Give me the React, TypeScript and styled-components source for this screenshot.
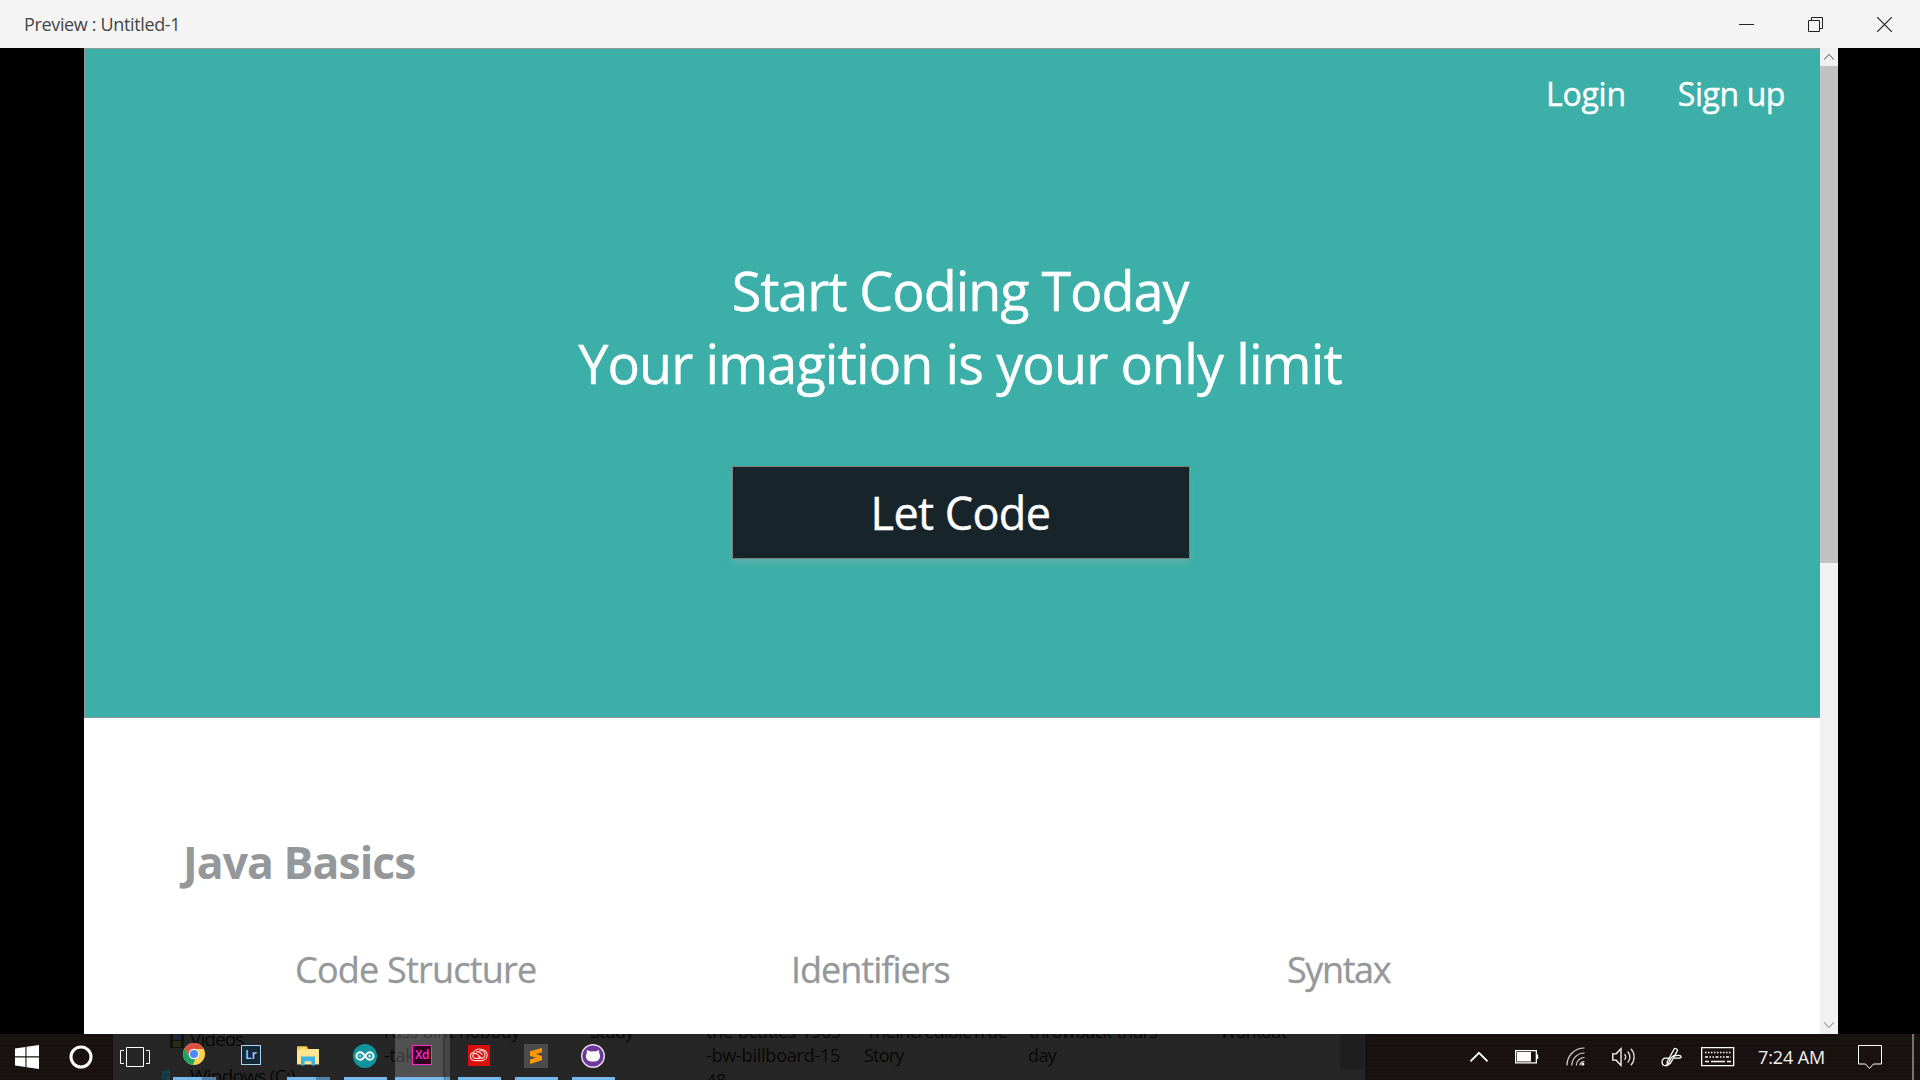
import React from "react";
import styled, { createGlobalStyle } from "styled-components";

const GlobalStyle = createGlobalStyle`
  * { box-sizing: border-box; }
  body {
    margin: 0;
    overflow: hidden;
    background: #000;
    font-family: "Open Sans", "Noto Sans", sans-serif;
  }
  svg { display: block; flex: none; }
`;

const Screen = styled.div`
  width: 1920px;
  height: 1080px;
  display: flex;
  flex-direction: column;
`;

/* ---------- window title bar ---------- */

const TitleBar = styled.header`
  height: 48px;
  flex: none;
  display: flex;
  align-items: center;
  justify-content: space-between;
  padding: 0 1px 0 24px;
  background: #f4f4f4;
`;

const WindowTitle = styled.span`
  font-size: 18px;
  line-height: 24px;
  letter-spacing: -0.35px;
  color: #444;
`;

const WindowControls = styled.div`
  display: flex;
  height: 48px;
`;

const ControlButton = styled.div`
  width: 69px;
  display: flex;
  align-items: center;
  justify-content: center;
`;

/* ---------- previewed page ---------- */

const Viewport = styled.main`
  flex: 1;
  min-height: 0;
  display: flex;
  padding: 0 82px 0 84px;
  background: #000;
`;

const Page = styled.div`
  flex: 1;
  background: #fff;
`;

const Hero = styled.section`
  height: 670px;
  display: flex;
  flex-direction: column;
  align-items: center;
  background: #3bafa8;
  border: solid #8c9a99;
  border-width: 1px 0 1px 1px;
  -webkit-text-stroke: 0.4px #fff;
`;

const Nav = styled.nav`
  align-self: stretch;
  display: flex;
  justify-content: flex-end;
  gap: 52px;
  padding: 23px 35px 0 0;
`;

const NavLink = styled.a<{ $tracking: number }>`
  font-size: 32px;
  line-height: 43px;
  letter-spacing: ${(p) => p.$tracking}px;
  color: #fff;
`;

const Headline = styled.h1`
  margin: 139px 0 66px 15px;
  font-size: 54px;
  font-weight: 400;
  line-height: 73px;
  text-align: center;
  color: #fff;
`;

const HeadlineRow = styled.div<{ $tracking: number }>`
  letter-spacing: ${(p) => p.$tracking}px;
`;

const CallToAction = styled.button`
  width: 458px;
  height: 93px;
  margin-left: 16px;
  padding: 0 0 1px;
  border: 1px solid #7f7f7f;
  background: #17252a;
  box-shadow: 0 4px 6px rgba(140, 175, 172, 0.4);
  font-family: inherit;
  font-size: 45px;
  letter-spacing: -0.6px;
  color: #fff;
  -webkit-text-stroke: inherit;
`;

const Lessons = styled.section`
  padding-top: 114px;
`;

const LessonsTitle = styled.h2`
  margin: 0 0 53px 99px;
  font-size: 44.5px;
  line-height: 60px;
  font-weight: 700;
  letter-spacing: -0.95px;
  color: #95989a;
`;

const LessonGrid = styled.div`
  display: grid;
  grid-template-columns: repeat(3, 496px);
  padding-left: 211px;
`;

const Lesson = styled.div<{ $tracking: number }>`
  font-size: 36px;
  line-height: 50px;
  letter-spacing: ${(p) => p.$tracking}px;
  color: #95989a;
  -webkit-text-stroke: 0.3px #95989a;
`;

const ScrollBar = styled.div`
  width: 18px;
  flex: none;
  display: flex;
  flex-direction: column;
  background: #f1f1f1;
`;

const ScrollArrow = styled.div`
  height: 18px;
  display: flex;
  align-items: center;
  justify-content: center;
`;

const ScrollThumb = styled.div`
  height: 497px;
  margin-bottom: auto;
  background: #c1c1c1;
`;

/* ---------- taskbar ---------- */

const TaskBar = styled.footer`
  position: relative;
  height: 46px;
  flex: none;
  display: flex;
  justify-content: space-between;
  overflow: hidden;
  background: repeating-linear-gradient(0deg, #1a1210 0 2px, #1c1412 2px 3px, #17100e 3px 5px);
`;

const Backdrop = styled.div`
  position: absolute;
  inset: 0 555px 0 113px;
  background: linear-gradient(90deg, transparent 1227px, #1f1f1f 1227px 1251px, transparent 1251px) 0 0 / 100% 36px no-repeat, #262626;
`;

const Ghost = styled.span<{ $x: number; $y: number; $tracking: number; $size?: number }>`
  position: absolute;
  left: ${(p) => p.$x - 113}px;
  top: ${(p) => p.$y - 1034 - 19}px;
  font-size: ${(p) => p.$size ?? 18}px;
  line-height: 24px;
  letter-spacing: ${(p) => p.$tracking}px;
  white-space: pre;
  color: #080808;
`;

const GhostPicture = styled.div<{ $x: number; $y: number }>`
  position: absolute;
  left: ${(p) => p.$x - 113}px;
  top: ${(p) => p.$y - 1034}px;
`;

const AppList = styled.div`
  position: relative;
  display: flex;
`;

const SystemButton = styled.div<{ $width: number }>`
  width: ${(p) => p.$width}px;
  display: flex;
  align-items: center;
  justify-content: center;
`;

const AppButton = styled.div<{ $active?: boolean; $stacked?: boolean; $bar?: boolean }>`
  width: ${(p) => (p.$active ? 55 : 43)}px;
  margin: ${(p) => (p.$active ? "0 1px" : "0 7px")};
  display: grid;
  grid-template-rows: 43px 3px;
  justify-items: center;
  align-items: center;
  background: ${(p) =>
    p.$active
      ? "linear-gradient(90deg, rgba(255,255,255,.2) 48px, rgba(255,255,255,.09) 48px 50px, rgba(255,255,255,.15) 50px)"
      : "none"};

  &::after {
    content: "";
    align-self: stretch;
    justify-self: stretch;
    background: ${(p) => {
      if (p.$bar === false) return "none";
      if (p.$active) return "linear-gradient(90deg, #76b9ed 49px, #4f7695 49px 50px, #6096c4 50px)";
      return p.$stacked ? "linear-gradient(90deg, #76b9ed 29px, #5482a8 29px)" : "#76b9ed";
    }};
  }
`;

const LetterTile = styled.div<{ $ink: string; $fill: string; $tracking: number }>`
  width: 20px;
  height: 20px;
  margin: 0 1px 1px 0;
  display: flex;
  align-items: center;
  justify-content: center;
  border: 1px solid ${(p) => p.$ink};
  background: ${(p) => p.$fill};
  color: ${(p) => p.$ink};
  font-size: 12px;
  font-weight: 600;
  line-height: 16px;
  letter-spacing: ${(p) => p.$tracking}px;
`;

const IconSlot = styled.div<{ $raise?: number }>`
  margin: 0 1px ${(p) => p.$raise ?? 0}px 0;
`;

const Tray = styled.div`
  position: relative;
  display: flex;
  align-items: center;
`;

const TrayItem = styled.div<{ $width: number; $gap?: number }>`
  width: ${(p) => p.$width}px;
  margin-right: ${(p) => p.$gap ?? 0}px;
  display: flex;
  align-items: center;
  justify-content: center;
`;

const Clock = styled.div`
  width: 101px;
  padding-left: 14px;
  font-size: 18px;
  line-height: 24px;
  letter-spacing: -0.12px;
  white-space: nowrap;
  color: #f2f2f2;
`;

const ShowDesktop = styled.div`
  align-self: stretch;
  width: 8px;
  border-left: 2px solid #77716f;
`;

/* ---------- icons ---------- */

const line = { fill: "none", stroke: "#fff", strokeWidth: 1.3 };

const WindowsLogo = () => (
  <svg width="24" height="24" viewBox="0 0 24 24" fill="#fff">
    <path d="M0 3.4 10.4 2v9.3H0zM11.5 1.8 24 0v11.3H11.5zM0 12.4h10.4v9.5L0 20.6zM11.5 12.4H24V24l-12.5-1.8z" />
  </svg>
);

const Cortana = () => (
  <svg width="24" height="24" viewBox="0 0 24 24">
    <circle cx="12" cy="12" r="10" fill="none" stroke="#fff" strokeWidth="3" />
  </svg>
);

const TaskView = () => (
  <svg width="30" height="20" viewBox="0 0 30 20" fill="none" stroke="#fff">
    <path d="M6.500.5h17v19h-17zM4 3.500H.5v13H4M26 3.500h3.500v13H26" />
  </svg>
);

const Chrome = () => (
  <svg width="22" height="22" viewBox="0 0 22 22">
    <circle cx="11" cy="11" r="11" fill="#fdd04e" />
    <path d="M1.500 5.500A11 11 0 0 1 20.500 5.500L20.600 6H11a5 5 0 0 0-4.300 7.500z" fill="#dd5144" />
    <path d="M1.500 5.500 6.700 13.500A5 5 0 0 0 12.500 15.800L9.900 21.900A11 11 0 0 1 1.500 5.500z" fill="#1da462" />
    <circle cx="11" cy="11" r="5.300" fill="#f4f4f4" />
    <circle cx="11" cy="11" r="4.100" fill="#4c8bf5" />
  </svg>
);

const Explorer = () => (
  <svg width="22" height="20" viewBox="0 0 22 20">
    <path d="M0 .6h10l1 2.400h11v15.400H0z" fill="#ffe48f" />
    <path d="M0 .6h10v2.800H0z" fill="#fcc32c" />
    <path d="M3 1.600h5v1H3z" fill="#fff3c8" />
    <path d="M4 19.400V10.600h14v8.800h-3.600v-4.200H7.600v4.200z" fill="#3ab2e6" />
  </svg>
);

const Arduino = () => (
  <svg width="24" height="24" viewBox="0 0 24 24">
    <circle cx="12" cy="12" r="12" fill="#0f959b" />
    <g fill="none" stroke="#fff" strokeWidth="1.900">
      <path d="M12 12C10.200 9.300 9 8.200 7.300 8.200a3.800 3.800 0 0 0 0 7.600C9 15.800 10.200 14.700 12 12s3-3.800 4.700-3.800a3.800 3.800 0 0 1 0 7.600c-1.700 0-2.900-1.100-4.700-3.800z" />
      <path d="M5.700 12h3M15.200 12h3M16.700 10.500v3" strokeWidth="1" />
    </g>
  </svg>
);

const CreativeCloud = () => (
  <svg width="22" height="21" viewBox="0 0 22 21">
    <rect width="22" height="21" fill="#dd0d0d" />
    <g fill="none" stroke="#ffd9d4" strokeWidth="1.100">
      <path d="M6.500 15.600a4.300 4.300 0 0 1-.6-8.500C7 5.100 9 4 11.600 4c4.500 0 7.600 2.700 7.600 5.900 0 3.300-2.400 5.700-5.400 5.700z" />
      <path d="M12 13.400H7.300a2.500 2.500 0 0 1 0-5c1.300 0 2 .7 3 1.700l3.200 3.300" />
      <path d="M8.300 6.900c2.600-1.300 4.200.6 6.200 2.900M11.200 5.900a4 4 0 1 1 2.600 7.500c-1.600 0-2.700-1.200-3.600-2.200" />
    </g>
  </svg>
);

const Sublime = () => (
  <svg width="24" height="24" viewBox="0 0 24 24">
    <rect width="24" height="24" rx="1" fill="#4b4b4b" />
    <path d="M6 7.300 18 4v4.300L12 10l6 1.900v4.400L6 20v-4.400l6-1.800-6-1.900z" fill="#ff9800" />
  </svg>
);

const GithubDesktop = () => (
  <svg width="24" height="24" viewBox="0 0 24 24">
    <circle cx="12" cy="12" r="11.300" fill="#6f379b" stroke="#e6dfec" strokeWidth="1.400" />
    <path
      d="M6 6.300c1.300 0 2.400.6 3.200 1.200a14 14 0 0 1 5.600 0c.8-.6 1.900-1.200 3.200-1.200.4 1 .3 2 .1 2.700.7.900.9 2 .9 3 0 4-2.500 5.600-7 5.600s-7-1.600-7-5.600c0-1 .2-2.100.9-3C5.700 8.300 5.600 7.300 6 6.300z"
      fill="#fff"
    />
  </svg>
);

const Battery = () => (
  <svg width="24" height="14" viewBox="0 0 24 14">
    <path d="M.65.650h20.700v12.200H.65z" {...line} />
    <path d="M2 2h14v9.500H2zM22 4.500h1.200v4.500H22z" fill="#fff" />
  </svg>
);

const Wifi = () => (
  <svg width="20" height="20" viewBox="0 0 20 20" fill="none" stroke="#d8d8d8" strokeWidth="1.200">
    <path d="M1 18.500C1 8.500 8.500 1 18.500 1" />
    <path d="M5.800 18.500C5.800 11.500 11.500 6 18.500 6M10.300 18.500c0-4.500 3.700-8 8.200-8" />
    <path d="M14 18.500c0-2 1.500-4 4.500-4" />
    <circle cx="16.900" cy="16.900" r="1.500" fill="#fff" stroke="none" />
  </svg>
);

const Volume = () => (
  <svg width="24" height="20" viewBox="0 0 24 20" {...line}>
    <path d="M.8 6.800h3.400L9 1.600v16.800l-4.800-5.200H.8z" />
    <path d="M12.500 7.300a4 4 0 0 1 0 5.400M15.700 4.500a8 8 0 0 1 0 11M18.900 1.800a12 12 0 0 1 0 16.400" stroke="#ddd" />
  </svg>
);

const Pen = () => (
  <svg width="21" height="22" viewBox="0 0 21 22" {...line}>
    <path d="M6.300 15.500 13.300 2.800c.7-1.200 3.800.4 3.100 1.800L9.400 17.300l-3.300 2.200z" />
    <path d="M9.400 12.200H4.600c-5 0-4.300 7.400-.3 7.400 3 0 3.600-3 4.700-5.500 1-2.400 2.500-4.500 5-4.500 3 0 4.800-1 5.800.6.800 1.400-.6 2-2.400 2h-4.600" />
  </svg>
);

const Keyboard = () => (
  <svg width="36" height="20" viewBox="0 0 36 20" {...line}>
    <path d="M.65.650h32v17.900H.65z" />
    <path d="M4 5.500h26" strokeDasharray="1.500 1.500" />
    <path d="M4 10h26" strokeDasharray="3 1.500 1.500 1.500 1.500 1.500" />
    <path d="M4 14.500h4M10 14.500h14M26 14.500h4" />
  </svg>
);

const Notifications = () => (
  <svg width="24" height="25" viewBox="0 0 24 25" {...line} strokeWidth="1">
    <path d="M.5.500h23v18.500H15.500l-4 4.500-4-4.500h-7z" />
  </svg>
);

const Chevron = ({ color, width, height }: { color: string; width: number; height: number }) => (
  <svg width={width} height={Math.abs(height)} viewBox="0 0 18 10" preserveAspectRatio="none"
    fill="none" stroke={color} strokeWidth="1.800">
    <path d={height > 0 ? "M.5 9.300 9 .8l8.500 8.500" : "M.5.800 9 9.300 17.500.8"} />
  </svg>
);

/* ---------- data ---------- */

const fileLabels = [
  { text: "Videos", x: 190, y: 1046, tracking: -0.9, size: 19 },
  { text: "Windows (C:)", x: 190, y: 1083, tracking: -0.75, size: 19 },
  { text: "russ-aint", x: 384, y: 1038, tracking: -0.4 },
  { text: "-take", x: 384, y: 1062, tracking: -0.3 },
  { text: "nobody", x: 459, y: 1038, tracking: -0.5 },
  { text: "Study", x: 590, y: 1038, tracking: -0.8 },
  { text: "the-beatles-1965", x: 706, y: 1038, tracking: -0.4 },
  { text: "-bw-billboard-15", x: 706, y: 1062, tracking: -0.23 },
  { text: "48", x: 706, y: 1087, tracking: -0.4 },
  { text: "TheIncredibleTrue", x: 866, y: 1038, tracking: -0.7 },
  { text: "Story", x: 864, y: 1062, tracking: -0.8 },
  { text: "throwback-thurs", x: 1029, y: 1038, tracking: -0.72 },
  { text: "day", x: 1028, y: 1062, tracking: -0.6 },
  { text: "Workout", x: 1220, y: 1038, tracking: -0.9 },
];

const lessons = [
  { name: "Code Structure", tracking: -0.78 },
  { name: "Identifiers", tracking: -1 },
  { name: "Syntax", tracking: -1.4 },
];

export default function App() {
  return (
    <Screen>
      <GlobalStyle />
      <TitleBar>
        <WindowTitle>Preview : Untitled-1</WindowTitle>
        <WindowControls>
          <ControlButton>
            <svg width="15" height="15"><path d="M0 7.500h15" stroke="#222" /></svg>
          </ControlButton>
          <ControlButton>
            <svg width="15" height="15" fill="none" stroke="#222">
              <path d="M.5 3.500h11v11H.5zM3.500 3.500V.5h11v11h-3" />
            </svg>
          </ControlButton>
          <ControlButton>
            <svg width="15" height="15"><path d="m0 0 15 15M15 0 0 15" stroke="#222" strokeWidth="1.200" /></svg>
          </ControlButton>
        </WindowControls>
      </TitleBar>

      <Viewport>
        <Page>
          <Hero>
            <Nav>
              <NavLink $tracking={-0.23}>Login</NavLink>
              <NavLink $tracking={-0.43}>Sign up</NavLink>
            </Nav>
            <Headline>
              <HeadlineRow $tracking={-1.08}>Start Coding Today</HeadlineRow>
              <HeadlineRow $tracking={-0.91}>Your imagition is your only limit</HeadlineRow>
            </Headline>
            <CallToAction>Let Code</CallToAction>
          </Hero>
          <Lessons>
            <LessonsTitle>Java Basics</LessonsTitle>
            <LessonGrid>
              {lessons.map((l) => (
                <Lesson key={l.name} $tracking={l.tracking}>{l.name}</Lesson>
              ))}
            </LessonGrid>
          </Lessons>
        </Page>
        <ScrollBar>
          <ScrollArrow><Chevron color="#7a7a7a" width={10} height={6} /></ScrollArrow>
          <ScrollThumb />
          <ScrollArrow><Chevron color="#9a9a9a" width={10} height={-6} /></ScrollArrow>
        </ScrollBar>
      </Viewport>

      <TaskBar>
        <Backdrop>
          <GhostPicture $x={170} $y={1034}>
            <svg width="15" height="14">
              <path d="M0 0h14v14H0z" fill="#11130f" />
              <path d="M3 0h8v6H3z" fill="#1b2a3a" />
              <path d="M3 7h8v6H3z" fill="#2b2a14" />
            </svg>
          </GhostPicture>
          <GhostPicture $x={162} $y={1070}>
            <svg width="8" height="10">
              <path d="M0 1h3.500v3.500H0zM4.500 0H8v4.500H4.500zM0 5.500h3.500V9H0zM4.500 5.500H8V10H4.500z" fill="#0f4656" />
            </svg>
          </GhostPicture>
          {fileLabels.map((f) => (
            <Ghost key={f.text} $x={f.x} $y={f.y} $tracking={f.tracking} $size={f.size}>{f.text}</Ghost>
          ))}
        </Backdrop>

        <AppList>
          <SystemButton $width={54}><WindowsLogo /></SystemButton>
          <SystemButton $width={54}><Cortana /></SystemButton>
          <SystemButton $width={54}><TaskView /></SystemButton>
          <SystemButton $width={4} />
          <AppButton $stacked><IconSlot $raise={3}><Chrome /></IconSlot></AppButton>
          <AppButton $bar={false}>
            <LetterTile $ink="#a9d5f2" $fill="#152a38" $tracking={0}>Lr</LetterTile>
          </AppButton>
          <AppButton $stacked><IconSlot><Explorer /></IconSlot></AppButton>
          <AppButton><IconSlot><Arduino /></IconSlot></AppButton>
          <AppButton $active>
            <LetterTile $ink="#ff2bc2" $fill="#2e001e" $tracking={-0.5}>Xd</LetterTile>
          </AppButton>
          <AppButton><IconSlot><CreativeCloud /></IconSlot></AppButton>
          <AppButton><IconSlot><Sublime /></IconSlot></AppButton>
          <AppButton><IconSlot><GithubDesktop /></IconSlot></AppButton>
        </AppList>

        <Tray>
          <TrayItem $width={46}><Chevron color="#fff" width={18} height={10} /></TrayItem>
          <TrayItem $width={50}><Battery /></TrayItem>
          <TrayItem $width={48}><Wifi /></TrayItem>
          <TrayItem $width={48}><Volume /></TrayItem>
          <TrayItem $width={46}><Pen /></TrayItem>
          <TrayItem $width={50}><Keyboard /></TrayItem>
          <Clock>7:24 AM</Clock>
          <TrayItem $width={50} $gap={17}><Notifications /></TrayItem>
          <ShowDesktop />
        </Tray>
      </TaskBar>
    </Screen>
  );
}
